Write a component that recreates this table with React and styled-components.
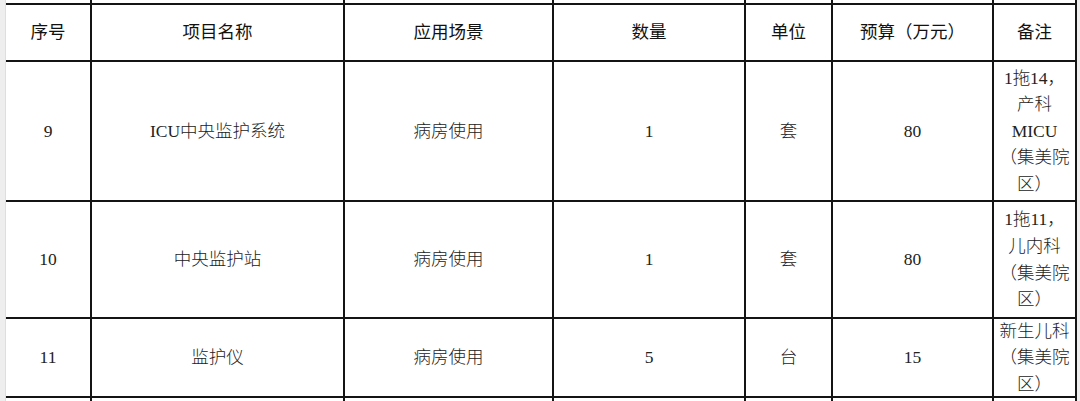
import React from "react";
import styled, { createGlobalStyle } from "styled-components";

const Global = createGlobalStyle`
  html, body { margin: 0; padding: 0; background: #eeeeee; overflow: hidden; }
  body { font-family: "Liberation Serif", "Noto Sans CJK SC", serif; color: #1d1d1d; }
`;

const Page = styled.div`
  display: flex;
  padding-left: 5px;
  height: 401px;
  overflow: hidden;
`;

const Sheet = styled.div`
  display: grid;
  grid-template-columns: 86px 253px 209px 192px 87px 161px 83px;
  grid-template-rows: 5px 57px 140px 117px 79px 12px;
  background: #ffffff;
  border-left: 1px solid #dedede;
  align-self: flex-start;
`;

const Cell = styled.div`
  display: flex;
  align-items: center;
  justify-content: center;
  text-align: center;
  padding: 0 3px;
  border-right: 2px solid #141414;
  border-bottom: ${(p) => (p.$last ? "none" : "2px solid #141414")};
  font-size: 17.5px;
  line-height: 26.6px;
  font-weight: ${(p) => (p.$head ? 400 : 300)};
  color: ${(p) => (p.$head ? "#111111" : "#222222")};
  overflow: hidden;
  min-width: 0;
`;

const columns = ["序号", "项目名称", "应用场景", "数量", "单位", "预算（万元）", "备注"];

const rows = [
  ["9", "ICU中央监护系统", "病房使用", "1", "套", "80", "1拖14，产科MICU（集美院区）"],
  ["10", "中央监护站", "病房使用", "1", "套", "80", "1拖11，儿内科（集美院区）"],
  ["11", "监护仪", "病房使用", "5", "台", "15", "新生儿科（集美院区）"],
];

export default function App() {
  return (
    <>
      <Global />
      <Page>
        <Sheet>
          {columns.map((c) => (
            <Cell key={"top" + c} />
          ))}
          {columns.map((c) => (
            <Cell key={c} $head>
              {c}
            </Cell>
          ))}
          {rows.map((r) =>
            r.map((v, i) => <Cell key={r[0] + "-" + i}>{v}</Cell>)
          )}
          {columns.map((c) => (
            <Cell key={"bot" + c} $last />
          ))}
        </Sheet>
      </Page>
    </>
  );
}
